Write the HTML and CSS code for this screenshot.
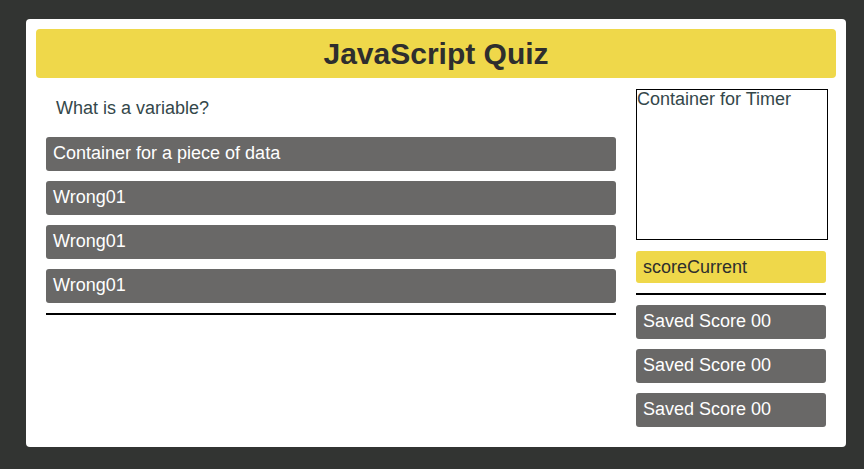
FILE: index.html
```html
<!DOCTYPE html>
<html>
<head>
<meta charset="utf-8">
<link rel="stylesheet" href="styles.css">
</head>
<body>
<div class="card">
  <header class="header"><h1>JavaScript Quiz</h1></header>
  <div class="main">
    <section class="quiz">
      <div class="question">What is a variable?</div>
      <div class="answers">
        <div class="answer">Container for a piece of data</div>
        <div class="answer">Wrong01</div>
        <div class="answer">Wrong01</div>
        <div class="answer">Wrong01</div>
      </div>
      <div class="rule"></div>
    </section>
    <aside class="side">
      <div class="timer">Container for Timer</div>
      <div class="score">scoreCurrent</div>
      <div class="rule"></div>
      <div class="saved">Saved Score 00</div>
      <div class="saved">Saved Score 00</div>
      <div class="saved">Saved Score 00</div>
    </aside>
  </div>
</div>
</body>
</html>
```
FILE: styles.css
```css
html, body {
  margin: 0;
  padding: 0;
}
body {
  background: #323432;
  font-family: "Liberation Sans", Arial, sans-serif;
  width: 864px;
  height: 469px;
  overflow: hidden;
}
.card {
  background: #ffffff;
  margin: 19px 18px 0 26px;
  padding: 10px 10px 19px;
  border-radius: 4px;
  box-sizing: border-box;
  height: 428px;
}
.header {
  background: #efd84a;
  height: 49px;
  border-radius: 4px;
  display: flex;
  align-items: center;
  justify-content: center;
}
.header h1 {
  margin: 0;
  font-size: 30px;
  font-weight: bold;
  color: #2e2e2e;
  line-height: 34px;
}
.main {
  display: flex;
  gap: 20px;
  padding: 11px 10px 0;
}
.quiz {
  width: 570px;
  display: flex;
  flex-direction: column;
}
.question {
  font-size: 18px;
  line-height: 21px;
  color: #34474a;
  padding: 9px 10px 18px;
}
.answers {
  display: flex;
  flex-direction: column;
  gap: 10px;
}
.answer, .saved {
  background: #696867;
  color: #ffffff;
  font-size: 18px;
  line-height: 32px;
  height: 34px;
  box-sizing: border-box;
  padding: 0 7px 2px;
  border-radius: 3px;
}
.rule {
  height: 2px;
  background: #000000;
  margin-top: 10px;
}
.side {
  width: 190px;
  display: flex;
  flex-direction: column;
}
.timer {
  width: 192px;
  height: 151px;
  box-sizing: border-box;
  border: 1px solid #000000;
  font-size: 18px;
  line-height: 18px;
  color: #34474a;
}
.score {
  margin-top: 11px;
  background: #efd84a;
  color: #2e2e2e;
  font-size: 18px;
  line-height: 32px;
  height: 32px;
  padding: 0 7px;
  border-radius: 3px;
}
.side .rule {
  margin-top: 10px;
  margin-bottom: 10px;
}
.side .saved + .saved {
  margin-top: 10px;
}
```
